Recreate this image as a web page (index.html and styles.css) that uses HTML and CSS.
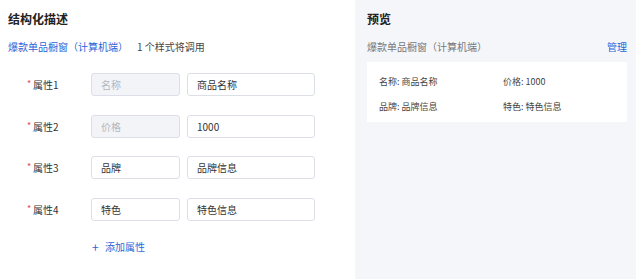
FILE: index.html
```html
<!DOCTYPE html>
<html lang="zh-CN">
<head>
<meta charset="utf-8">
<link rel="stylesheet" href="styles.css">
</head>
<body>
<div class="page">
  <section class="editor">
    <h2 class="title">结构化描述</h2>
    <div class="sub"><span class="link">爆款单品橱窗（计算机端）</span><span class="note">1 个样式将调用</span></div>
    <div class="rows">
      <div class="row">
        <label class="label"><span class="req">*</span>属性1</label>
        <div class="input key disabled">名称</div>
        <div class="input val">商品名称</div>
      </div>
      <div class="row">
        <label class="label"><span class="req">*</span>属性2</label>
        <div class="input key disabled">价格</div>
        <div class="input val">1000</div>
      </div>
      <div class="row">
        <label class="label"><span class="req">*</span>属性3</label>
        <div class="input key">品牌</div>
        <div class="input val">品牌信息</div>
      </div>
      <div class="row">
        <label class="label"><span class="req">*</span>属性4</label>
        <div class="input key">特色</div>
        <div class="input val">特色信息</div>
      </div>
    </div>
    <div class="add"><span class="plus">+</span>添加属性</div>
  </section>
  <aside class="preview">
    <h2 class="title">预览</h2>
    <div class="phead"><span class="pname">爆款单品橱窗（计算机端）</span><span class="link">管理</span></div>
    <div class="card">
      <div class="cell">名称: 商品名称</div>
      <div class="cell">价格: 1000</div>
      <div class="cell">品牌: 品牌信息</div>
      <div class="cell">特色: 特色信息</div>
    </div>
  </aside>
</div>
</body>
</html>
```
FILE: styles.css
```css
* { box-sizing: border-box; }
html, body { margin: 0; padding: 0; }
body {
  font-family: "Noto Sans CJK SC", "Noto Sans", sans-serif;
  font-size: 10px;
  color: #333;
  background: #fff;
}
.page {
  display: flex;
  width: 636px;
  height: 279px;
}
.editor {
  width: 355px;
  padding: 10px 0 0 8px;
}
.title {
  margin: 0;
  font-size: 12px;
  line-height: 17px;
  font-weight: 700;
  color: #222;
}
.sub {
  margin-top: 13px;
  line-height: 14px;
  display: flex;
  gap: 9px;
}
.link { color: #2a66d9; }
.note { color: #444; }
.rows {
  margin-top: 19px;
  display: flex;
  flex-direction: column;
  gap: 18.6px;
}
.row {
  display: flex;
  align-items: center;
  height: 23px;
}
.label {
  width: 83px;
  padding-left: 19px;
  color: #333;
  display: flex;
  align-items: center;
}
.req {
  color: #e5484d;
  width: 6px;
  font-size: 9px;
  position: relative;
  top: -1px;
}
.input {
  height: 23px;
  border: 1px solid #dcdfe8;
  border-radius: 3px;
  display: flex;
  align-items: center;
  color: #333;
  background: #fff;
}
.key { width: 89px; padding-left: 9px; }
.val { width: 128px; margin-left: 7px; padding-left: 9px; }
.disabled { background: #f3f4f7; color: #b4b7bf; }
.add {
  margin-top: 19px;
  margin-left: 84px;
  color: #2a66d9;
  line-height: 14px;
  display: flex;
  align-items: center;
}
.plus {
  font-size: 12px;
  width: 13px;
  font-weight: 400;
}
.preview {
  flex: 1;
  background: #f5f6fa;
  padding: 10px 9px 0 12px;
}
.phead {
  margin-top: 13px;
  display: flex;
  justify-content: space-between;
  line-height: 14px;
}
.pname { color: #777; }
.card {
  margin-top: 8px;
  background: #fff;
  height: 60px;
  padding: 7px 0 0 12px;
  display: grid;
  grid-template-columns: 124px 1fr;
  grid-auto-rows: 25px;
  align-items: center;
  font-size: 9px;
  color: #444;
}
```
